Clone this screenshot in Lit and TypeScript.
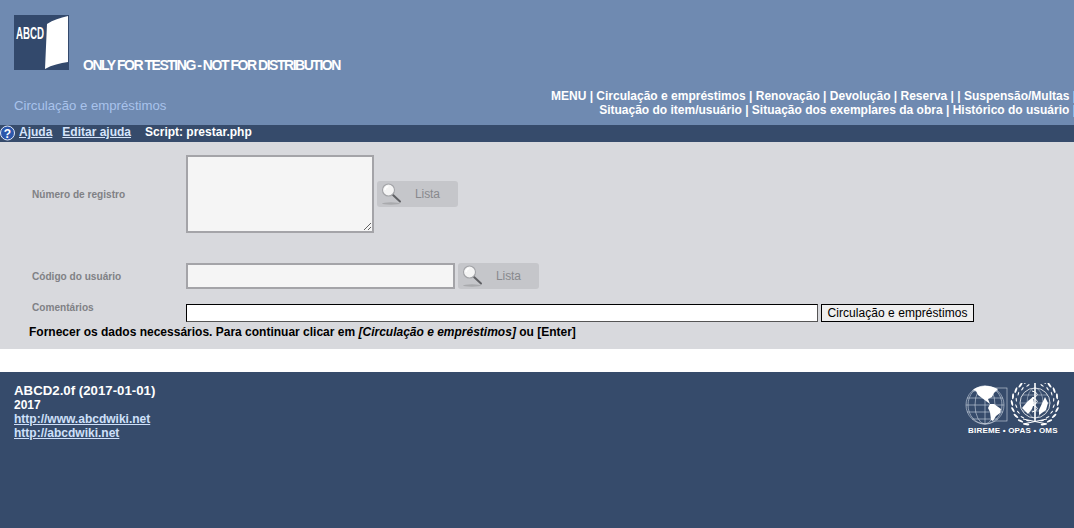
import { LitElement, html, css, svg } from "lit";
import { customElement } from "lit/decorators.js";

const lens = html`<svg class="lens" width="24" height="24" viewBox="0 0 24 24">
  <ellipse cx="11" cy="21.5" rx="9" ry="1.2" fill="#a9aaad"/>
  <path d="M12.5 12.5 L20 19.5" stroke="#5f6064" stroke-width="2" stroke-linecap="round"/>
  <circle cx="8.5" cy="8" r="6" fill="#f4f4f4" stroke="#a2a3a7" stroke-width="1.1"/>
  <path d="M5 8a3.6 3.6 0 0 1 3.4-3.4" stroke="#fff" stroke-width="1.5" fill="none"/>
</svg>`;

const laurel = (r: number, side: number, count: number, w: number, h: number) => {
  const out = [];
  for (let i = 0; i < count; i++) {
    const a = -68 + (i * 136) / (count - 1);
    const rad = (a * Math.PI) / 180;
    const x = 72 + side * r * Math.cos(rad);
    const y = 20 - r * Math.sin(rad);
    const rot = -side * a + side * 14;
    out.push(
      svg`<ellipse cx=${x.toFixed(1)} cy=${y.toFixed(1)} rx=${w} ry=${h} transform="rotate(${rot.toFixed(0)} ${x.toFixed(1)} ${y.toFixed(1)})"/>`
    );
  }
  return out;
};

@customElement("app-root")
export class AppRoot extends LitElement {
  static styles = css`
    :host { display: block; font-family: "Liberation Sans", Arial, sans-serif; height: 528px; background: #364b6b; }
    header { height: 125px; box-sizing: border-box; background: #6f8ab1; display: flex; flex-direction: column; padding: 15px 0 0 14px; }
    .brand { display: flex; align-items: flex-end; height: 55px; }
    .logo { display: block; flex: none; }
    .only { margin-left: 14px; color: #fff; font-weight: bold; font-size: 14px; line-height: 16px; letter-spacing: -1.47px; white-space: nowrap; position: relative; top: 3px; }
    .sub { display: flex; justify-content: space-between; align-items: flex-start; margin-top: 19px; }
    .crumb { color: #a9c3ec; font-size: 13.2px; line-height: 16px; padding-top: 9px; }
    .menu { color: #fff; font-weight: bold; font-size: 12px; line-height: 14px; text-align: right; white-space: nowrap; margin-right: -2px; }
    .help { height: 17px; box-sizing: border-box; padding-bottom: 3px; background: #364b6b; display: flex; align-items: center; font-size: 12px; font-weight: bold; color: #fff; }
    .help svg { display: block; margin-right: 3px; flex: none; position: relative; top: 1px; }
    .help a { color: #d5e4fb; text-decoration: underline; margin-right: 10px; }
    .help span { margin-left: 4px; }
    main { height: 207px; box-sizing: border-box; background: #d8d9dd; padding: 13px 0 0 0; }
    .grid { display: grid; grid-template-columns: 186px 1fr; }
    label { color: #808185; font-weight: bold; font-size: 10.1px; padding-left: 32px; }
    .r1 { display: flex; align-items: center; height: 78px; }
    .r2 { display: flex; align-items: center; height: 26px; margin-top: 30px; }
    .r3 { display: flex; align-items: flex-start; height: 18px; margin-top: 15px; }
    .ctl { display: flex; align-items: center; }
    textarea { box-sizing: border-box; width: 188px; height: 78px; margin: 0; background: #f5f5f5; border: 2px solid #a4a4a8; outline: none; display: block; }
    .txt { box-sizing: border-box; width: 269px; height: 26px; margin: 0; background: #f5f5f5; border: 2px solid #a4a4a8; display: block; }
    .lista { width: 81px; height: 26px; box-sizing: border-box; margin: 0 0 0 3px; padding: 0 0 0 3px; display: flex; align-items: center; background: #c5c6ca; border-radius: 3px; color: #88898d; font: 12px "Liberation Sans", Arial, sans-serif; flex: none; }
    .lista .lens { flex: none; }
    .lista b { font-weight: normal; margin-left: 11px; letter-spacing: -0.1px; }
    .com { box-sizing: border-box; width: 632px; height: 18px; margin: 0; background: #fff; border: 1px solid #555; border-color: #000 #555 #555 #000; display: block; }
    .go { box-sizing: border-box; width: 153px; height: 18px; margin: 0 0 0 3px; padding: 0; background: #efefef; border: 1px solid #000; color: #000; font: 12px "Liberation Sans", Arial, sans-serif; letter-spacing: 0.05px; }
    .lab3 { line-height: 8px; }
    .note { margin: 3px 0 0 29px; font-size: 12px; font-weight: bold; line-height: 14px; color: #000; }
    .gap { height: 23px; background: #fff; }
    footer { height: 156px; box-sizing: border-box; background: #364b6b; padding: 11px 14px 0 14px; display: flex; justify-content: space-between; align-items: flex-start; color: #fff; }
    .ver { font-size: 13.25px; font-weight: bold; line-height: 15px; }
    .inf { font-size: 12px; font-weight: bold; line-height: 14px; }
    .inf a { display: block; color: #cfe0fa; text-decoration: underline; }
    .org { width: 97px; display: flex; flex-direction: column; align-items: flex-start; }
    .org svg { display: block; }
    .org div { font-size: 8px; font-weight: bold; letter-spacing: 0.2px; line-height: 10px; white-space: nowrap; color: #fff; margin-left: 5px; }
  `;

  render() {
    return html`
      <header>
        <div class="brand">
          <svg class="logo" width="55" height="55" viewBox="0 0 55 55">
            <rect width="55" height="55" fill="#33496c"/>
            <path d="M33 9 C39 5 46 3 54 1 L54 47 C46 48 38 50 31 54 Z" fill="#fff"/>
            <text x="2" y="24" font-family="Liberation Sans, Arial, sans-serif" font-weight="bold" font-size="16" textLength="28" lengthAdjust="spacingAndGlyphs" fill="#fff">ABCD</text>
          </svg>
          <div class="only">ONLY FOR TESTING - NOT FOR DISTRIBUTION</div>
        </div>
        <div class="sub">
          <div class="crumb">Circulação e empréstimos</div>
          <div class="menu">MENU | Circulação e empréstimos | Renovação | Devolução | Reserva | | Suspensão/Multas |<br>Situação do item/usuário | Situação dos exemplares da obra | Histórico do usuário |</div>
        </div>
      </header>
      <div class="help">
        <svg width="16" height="16" viewBox="0 0 16 16">
          <circle cx="7.5" cy="8" r="7" fill="#2c57ab" stroke="#dfe8f8" stroke-width="1"/>
          <text x="7.5" y="12.5" text-anchor="middle" font-family="Liberation Sans, Arial, sans-serif" font-weight="bold" font-size="12" fill="#fff">?</text>
        </svg>
        <a>Ajuda</a><a>Editar ajuda</a><span>Script: prestar.php</span>
      </div>
      <main>
        <div class="grid">
          <label class="r1">Número de registro</label>
          <div class="r1 ctl"><textarea></textarea><div class="lista">${lens}<b>Lista</b></div></div>
          <label class="r2">Código do usuário</label>
          <div class="r2 ctl"><div class="txt"></div><div class="lista">${lens}<b>Lista</b></div></div>
          <label class="r3"><span class="lab3">Comentários</span></label>
          <div class="r3 ctl"><div class="com"></div><button class="go">Circulação e empréstimos</button></div>
        </div>
        <div class="note">Fornecer os dados necessários. Para continuar clicar em <i>[Circulação e empréstimos]</i> ou [Enter]</div>
      </main>
      <div class="gap"></div>
      <footer>
        <div>
          <div class="ver">ABCD2.0f (2017-01-01)</div>
          <div class="inf">2017<a>http://www.abcdwiki.net</a><a>http://abcdwiki.net</a></div>
        </div>
        <div class="org">
          <svg width="97" height="43" viewBox="0 0 97 43">
            <g fill="none" stroke="#cfd6e2" stroke-width="0.6">
              <rect x="26" y="5" width="18" height="33"/>
              <circle cx="22" cy="22" r="19" fill="#364b6b"/>
              <ellipse cx="22" cy="22" rx="10" ry="19"/>
              <ellipse cx="22" cy="22" rx="17" ry="19"/>
              <path d="M22 3V41M4 15H40M4 29H40M9 8H35M9 36H35M3 22H41"/>
            </g>
            <path d="M10 7 C14 3 24 2 30 4 L35 6 L31 10 L29 14 L25 16 L27 21 L23 18 L19 15 L15 12 L13 8 Z" fill="#fff"/>
            <path d="M27 21 L31 21 L38 26 L37 30 L33 33 L30 38 L28 37 L27 29 L25 25 Z" fill="#fff"/>
            <g fill="#fff">
              ${laurel(23, -1, 9, 1, 3)}${laurel(23, 1, 9, 1, 3)}
              ${laurel(19, -1, 8, 0.6, 2)}${laurel(19, 1, 8, 0.6, 2)}
            </g>
            <g fill="none" stroke="#cfd6e2" stroke-width="0.5">
              <circle cx="72" cy="20" r="15" fill="#364b6b" stroke="#fff" stroke-width="0.8"/>
              <ellipse cx="72" cy="20" rx="8" ry="15"/>
              <path d="M57 20H87M59 12H85M59 28H85"/>
            </g>
            <path d="M59 25 L65 18 L70 14 L71 20 L69 26 L65 31 Z" fill="#fff"/>
            <path d="M76 27 L82 14 L85 20 L83 27 L76 32 Z" fill="#fff"/>
            <path d="M72 0V38" stroke="#fff" stroke-width="1.6"/>
            <path d="M69 8 C76 10 76 13 69 15 C76 17 76 20 69 22 C76 24 76 27 69 29" fill="none" stroke="#fff" stroke-width="1"/>
            <path d="M60 36 L84 41 M84 36 L60 41" stroke="#fff" stroke-width="1"/>
          </svg>
          <div>BIREME • OPAS • OMS</div>
        </div>
      </footer>
    `;
  }
}
